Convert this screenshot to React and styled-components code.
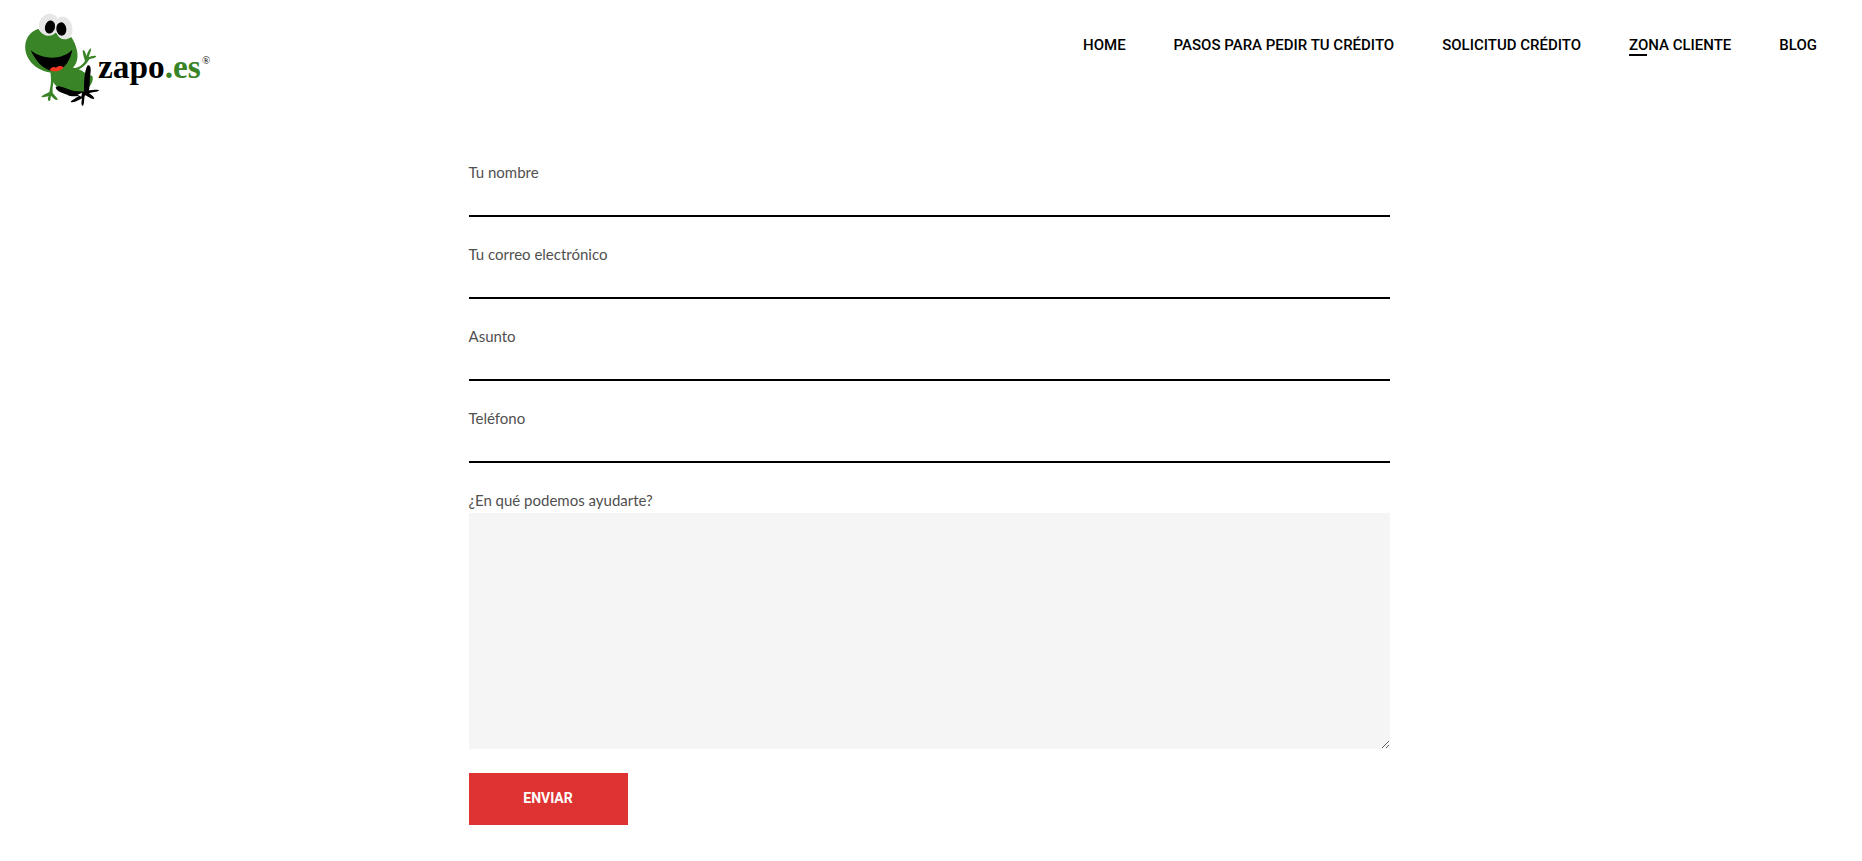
import React, { useState } from "react";
import styled, { createGlobalStyle } from "styled-components";

const links = [
  { label: "HOME", href: "#home" },
  { label: "PASOS PARA PEDIR TU CRÉDITO", href: "#pasos" },
  { label: "SOLICITUD CRÉDITO", href: "#solicitud" },
  { label: "ZONA CLIENTE", href: "#zona-cliente", active: true },
  { label: "BLOG", href: "#blog" },
];

const fields = [
  { name: "nombre", label: "Tu nombre", type: "text" },
  { name: "correo", label: "Tu correo electrónico", type: "email" },
  { name: "asunto", label: "Asunto", type: "text" },
  { name: "telefono", label: "Teléfono", type: "tel" },
];

const Logo = () => (
  <LogoSvg viewBox="30 30 600 300" role="img" aria-label="zapo.es">
    {/* body and arms */}
    <g fill="#388427">
      <path d="M122 205C122 235 130 258 150 264C176 268 190 284 212 277C235 268 251 250 248 230C243 222 226 222 216 212C204 206 192 205 185 200Z" />
      <path d="M186 206C205 203 218 196 225 182C221 172 218 160 218 151C222 149 226 153 229 168C233 160 236 148 242 145C245 149 240 160 236 172C242 169 250 166 258 168C260 173 250 174 238 178C229 193 215 207 195 214Z" />
      <path d="M121 214C124 236 124 252 118 276C108 281 100 284 94 290C98 294 108 290 116 288C112 296 113 303 119 303C123 300 121 292 123 287C129 294 137 302 143 300C144 294 133 286 128 278C126 262 131 246 134 232Z" />
    </g>
    {/* legs */}
    <g fill="#000">
      <path d="M137 261C146 255 160 263 176 268C190 274 207 275 220 274C235 271 254 267 267 270C268 275 252 276 237 279C244 284 254 292 252 297C244 299 233 288 225 286C221 296 224 311 219 317C213 319 214 307 216 295C204 302 188 310 182 306C184 300 201 293 207 287C194 290 178 289 172 284C160 281 137 273 137 261Z" />
      <path d="M233 196C243 193 244 210 240 228C239 246 240 262 235 278C229 281 223 279 222 272C222 252 222 214 233 196Z" />
    </g>
    <path d="M203 284L216 278L214 290Z" fill="#fff" />
    {/* eyes behind the head */}
    <g fill="#e6e6e6">
      <ellipse cx="117" cy="75" rx="30" ry="34" transform="rotate(20 117 75)" />
      <ellipse cx="162" cy="84" rx="25" ry="35" transform="rotate(-14 162 84)" />
    </g>
    {/* head */}
    <path
      d="M85 86C94 103 111 111 126 106C135 102 137 94 141 102C149 119 166 123 184 111C199 134 209 167 198 190C188 213 157 220 132 219C91 216 53 192 46 150C43 119 57 96 85 86Z"
      fill="#388427"
    />
    <path d="M117 67C125 59 134 67 137 76L137 94L123 104C106 104 99 83 117 67Z" fill="#e6e6e6" />
    <ellipse cx="120" cy="81" rx="15" ry="20" transform="rotate(12 120 81)" />
    <ellipse cx="154" cy="87" rx="15" ry="20" transform="rotate(-8 154 87)" />
    {/* mouth */}
    <path d="M62 151C91 176 151 185 187 149C181 181 161 216 127 213C96 207 77 182 62 151Z" />
    <path
      d="M119 211C122 202 130 198 138 203C145 196 156 196 161 203C149 214 132 217 119 211Z"
      fill="#f93822"
    />
    <LogoText x="264" y="233">
      zapo<tspan fill="#388427">.es</tspan>
    </LogoText>
    <Registered x="576" y="191">
      ®
    </Registered>
  </LogoSvg>
);

const App = () => {
  const [values, setValues] = useState({});

  const handleChange = (ev) => {
    setValues({ ...values, [ev.target.name]: ev.target.value });
  };

  return (
    <>
      <GlobalStyle />
      <Header>
        <LogoLink href="#home">
          <Logo />
        </LogoLink>
        <Nav>
          {links.map((link) => (
            <NavLink key={link.label} href={link.href} $active={link.active}>
              {link.label}
            </NavLink>
          ))}
        </Nav>
      </Header>
      <Main>
        <Form onSubmit={(ev) => ev.preventDefault()}>
          {fields.map((field) => (
            <Field key={field.name}>
              <Label htmlFor={field.name}>{field.label}</Label>
              <Input
                id={field.name}
                name={field.name}
                type={field.type}
                value={values[field.name] || ""}
                onChange={handleChange}
              />
            </Field>
          ))}
          <Field>
            <Label htmlFor="mensaje">¿En qué podemos ayudarte?</Label>
            <Message
              id="mensaje"
              name="mensaje"
              value={values.mensaje || ""}
              onChange={handleChange}
            />
          </Field>
          <Submit type="submit">ENVIAR</Submit>
        </Form>
      </Main>
    </>
  );
};

const GlobalStyle = createGlobalStyle`
  *, *::before, *::after {
    box-sizing: border-box;
  }
  body {
    margin: 0;
    background: #fff;
    color: #505050;
    font-family: Lato, "Liberation Sans", sans-serif;
  }
`;

const Header = styled.header`
  display: flex;
  justify-content: space-between;
  align-items: flex-start;
  padding: 10px 45px 10px 20px;
`;

const LogoLink = styled.a`
  display: block;
  flex: none;
`;

const LogoSvg = styled.svg`
  display: block;
  width: 200px;
  height: 100px;
`;

const LogoText = styled.text`
  font-family: "Liberation Serif", serif;
  font-size: 100px;
  font-weight: 700;
`;

const Registered = styled.text`
  font-family: "Liberation Serif", serif;
  font-size: 32px;
`;

const Nav = styled.nav`
  display: flex;
  flex-wrap: wrap;
  gap: 48px;
  padding-top: 24px;
`;

const NavLink = styled.a`
  position: relative;
  color: #000;
  font-family: Roboto, "Liberation Sans", sans-serif;
  font-size: 15px;
  font-weight: 500;
  line-height: 22px;
  text-decoration: none;

  &::after {
    content: "";
    display: ${(props) => (props.$active ? "block" : "none")};
    position: absolute;
    left: 0;
    bottom: 0;
    width: 18px;
    height: 2px;
    background: #000;
  }
`;

const Main = styled.main`
  padding: 39px 12px 36px 8px;
`;

const Form = styled.form`
  display: flex;
  flex-direction: column;
  align-items: flex-start;
  gap: 24px;
  width: 50%;
  margin: 0 auto;
`;

const Field = styled.div`
  display: flex;
  flex-direction: column;
  width: 100%;
`;

const Label = styled.label`
  font-size: 15px;
  line-height: 26px;
`;

const Input = styled.input`
  width: 100%;
  height: 32px;
  padding: 0;
  border: none;
  border-bottom: 2px solid #000;
  background: transparent;
  font: inherit;
  outline: none;
`;

const Message = styled.textarea`
  width: 100%;
  height: 236px;
  padding: 12px;
  border: none;
  background: #f5f5f5;
  font: inherit;
  outline: none;
  resize: vertical;
`;

const Submit = styled.button`
  min-width: 159px;
  height: 52px;
  padding: 0 24px 2px;
  border: none;
  background: #dd3333;
  color: #fff;
  font-family: Roboto, "Liberation Sans", sans-serif;
  font-size: 14px;
  font-weight: 700;
  cursor: pointer;
`;

export default App;
